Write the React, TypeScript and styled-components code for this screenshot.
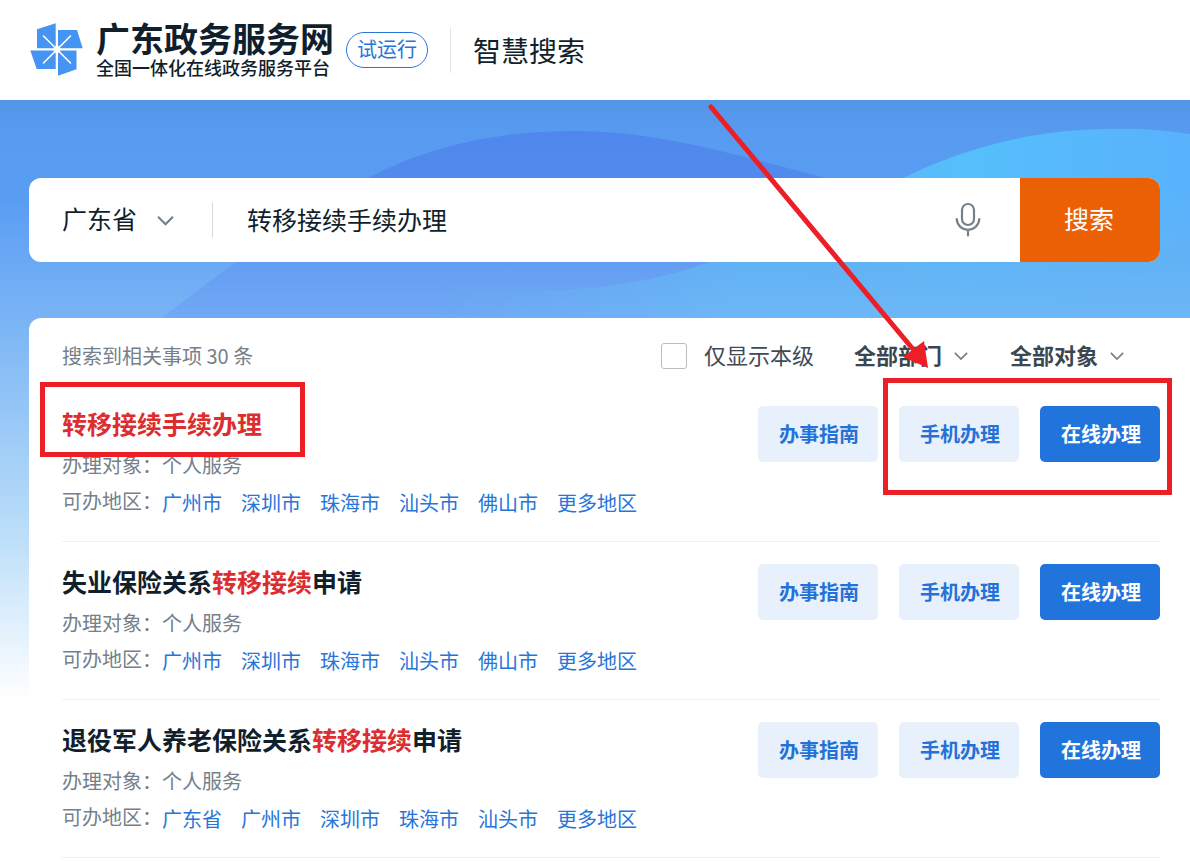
import React from "react";
import styled, { createGlobalStyle } from "styled-components";

const GlobalStyle = createGlobalStyle`
  *, *::before, *::after { box-sizing: border-box; }
  body {
    margin: 0;
    background: #fff;
    color: #111f2c;
    font-family: "Noto Sans CJK SC", "Liberation Sans", sans-serif;
    font-size: 20px;
  }
  button, input, select { font-family: inherit; color: inherit; }
`;

const RED = "#ec1f27";

const Page = styled.div`
  position: relative;
  overflow-x: hidden;
`;

const Header = styled.header`
  display: flex;
  align-items: center;
  height: 100px;
  padding: 0 30px;
  background: #fff;
`;

const Brand = styled.a`
  display: flex;
  align-items: center;
  gap: 12px;
  color: inherit;
  text-decoration: none;
`;

const BrandText = styled.span`
  display: flex;
  flex-direction: column;
  padding-bottom: 2px;
`;

const BrandName = styled.strong`
  font-size: 34px;
  line-height: 36px;
  font-weight: 700;
`;

const BrandSlogan = styled.span`
  font-size: 18px;
  line-height: 22px;
  font-weight: 500;
`;

const TrialBadge = styled.span`
  margin-left: 12px;
  padding: 0 10px 2px;
  border: 1px solid #2775d9;
  border-radius: 18px;
  color: #2775d9;
  font-size: 20px;
  line-height: 32px;
`;

const HeaderTitle = styled.h1`
  margin: 0 0 0 22px;
  padding-left: 22px;
  border-left: 1px solid #e3e6ea;
  font-size: 28px;
  line-height: 46px;
  font-weight: 400;
`;

const Hero = styled.main`
  position: relative;
  background: linear-gradient(
    #5395e8 0,
    #589cf2 40px,
    #599df3 100px,
    #7ab4f5 220px,
    #bddff9 440px,
    #fff 600px
  );
  padding-top: 78px;
`;

const Waves = styled.svg`
  position: absolute;
  top: 0;
  left: 0;
  width: 100%;
  height: 230px;
`;

const SearchBar = styled.form`
  position: relative;
  display: flex;
  align-items: center;
  height: 84px;
  margin: 0 30px 56px 29px;
  border-radius: 12px;
  background: #fff;
  overflow: hidden;
`;

const SelectWrap = styled.span`
  position: relative;
  display: inline-flex;
  align-items: center;
  color: #3f4a54;

  svg {
    position: absolute;
    right: 0;
    pointer-events: none;
  }
`;

const Dropdown = styled.select<{ $size: "large" | "medium" }>`
  appearance: none;
  border: 0;
  margin: 0;
  background: transparent;
  padding: 0 ${(p) => (p.$size === "large" ? 36 : 25)}px 4px 0;
  font-size: ${(p) => (p.$size === "large" ? 25 : 22)}px;
  font-weight: ${(p) => (p.$size === "large" ? 400 : 700)};
  color: ${(p) => (p.$size === "large" ? "#111f2c" : "#3a4650")};
  line-height: 32px;
`;

const RegionPicker = styled.div`
  margin-left: 33px;
  padding-right: 38px;
  border-right: 1px solid #d5d8dc;
`;

const SearchInput = styled.input`
  flex: 1;
  min-width: 0;
  height: 84px;
  border: 0;
  padding: 0 0 2px 34px;
  background: transparent;
  font-size: 25px;
  outline: 0;
`;

const VoiceButton = styled.button`
  display: flex;
  border: 0;
  padding: 0;
  margin-right: 39px;
  background: none;
  color: #75808a;
`;

const SearchButton = styled.button`
  align-self: stretch;
  width: 140px;
  border: 0;
  padding: 0 2px 4px 0;
  background: #eb6004;
  color: #fff;
  font-size: 25px;
`;

const Results = styled.section`
  position: relative;
  margin-left: 29px;
  padding: 20px 30px 0 33px;
  border-radius: 12px 0 0 0;
  background: #fff;
`;

const FilterBar = styled.div`
  display: flex;
  align-items: center;
  height: 36px;
  margin-bottom: 10px;
  padding-right: 36px;
`;

const Count = styled.p`
  margin: 0 auto 0 0;
  padding-bottom: 2px;
  color: #75808a;
`;

const OwnLevel = styled.label`
  display: flex;
  align-items: center;
  gap: 17px;
  margin-right: 40px;
  color: #3f4a54;
  font-size: 22px;

  span {
    padding-bottom: 4px;
  }
`;

const Checkbox = styled.input`
  appearance: none;
  width: 26px;
  height: 26px;
  margin: 0;
  border: 1px solid #b9bec3;
  border-radius: 3px;
  background: #fff;
`;

const Filters = styled.div`
  display: flex;
  gap: 42px;
`;

const List = styled.ul`
  list-style: none;
  margin: 0;
  padding: 0;
`;

const Item = styled.li`
  display: flex;
  justify-content: space-between;
  align-items: flex-start;
  padding: 22px 0 18px;
  border-bottom: 1px solid #eff1f3;
`;

const ItemTitle = styled.h2`
  position: relative;
  width: max-content;
  margin: 0 0 7px;
  font-size: 25px;
  line-height: 34px;
  font-weight: 700;
`;

const Keyword = styled.em`
  color: #dc2d30;
  font-style: normal;
`;

const Meta = styled.div`
  display: flex;
  align-items: flex-start;
  color: #75808a;
  line-height: 36px;
`;

const Regions = styled.span`
  display: flex;
  gap: 19px;
  line-height: 40px;
`;

const RegionLink = styled.a`
  color: #2775d9;
  text-decoration: none;
`;

const Actions = styled.div`
  position: relative;
  display: flex;
  gap: 21px;
`;

const ActionButton = styled.button<{ $primary?: boolean }>`
  width: 120px;
  height: 56px;
  padding: 0 0 2px 2px;
  border: 0;
  border-radius: 5px;
  background: ${(p) => (p.$primary ? "#2074dc" : "#e8f0fb")};
  color: ${(p) => (p.$primary ? "#fff" : "#2472d8")};
  font-size: 20px;
  font-weight: 700;
`;

const TitleMark = styled.span`
  position: absolute;
  inset: -24px -43px -17px -22px;
  border: 5px solid ${RED};
`;

const ActionMark = styled.span`
  position: absolute;
  top: -28px;
  right: -12px;
  width: 289px;
  height: 117px;
  border: 5px solid ${RED};
  pointer-events: none;
`;

const Arrow = styled.svg`
  position: absolute;
  top: 100px;
  right: 250px;
  pointer-events: none;
`;

const CYAN_WAVE =
  "M1190 34 Q1150 28 1110 29 C1030 29 960 50 903 78 C830 112 775 138 710 162 C610 198 500 196 400 178 L300 230 H1190Z";

const Logo = () => (
  <svg width="54" height="56" viewBox="0 0 54 56" aria-hidden="true">
    <g fill="#4593f2">
      <path d="M7 7.300 25.700 1.300V26.300H7Z" />
      <path d="M28 8H47L52.700 26.300H28Z" />
      <path d="M28 28.500H46.500V47.300L28 53.700Z" />
      <path d="M.3 28.500H25.700V47H6.700Z" />
    </g>
    <g stroke="#fff" strokeWidth="1.600" strokeLinecap="round">
      <path d="M13.500 14 40.500 41M40.500 14 13.500 41" />
      <circle cx="27" cy="27.500" r="2.800" fill="#fff" />
    </g>
  </svg>
);

const Chevron = ({ size }: { size: number }) => (
  <svg width={size} height={size} viewBox="0 0 16 16" fill="none" stroke="#75808a" strokeWidth="2" aria-hidden="true">
    <path d="M1 4.500 8 11.500 15 4.500" />
  </svg>
);

const Microphone = () => (
  <svg width="26" height="36" viewBox="0 0 26 36" fill="none" stroke="currentColor" strokeWidth="2.200" strokeLinecap="round" aria-hidden="true">
    <rect x="7" y="2" width="12" height="21" rx="6" />
    <path d="M1.700 17C3 31.500 23 31.500 24.300 17M13 28.500V33.500" />
  </svg>
);

const items = [
  {
    title: [["转移接续手续办理", true]],
    regions: ["广州市", "深圳市", "珠海市", "汕头市", "佛山市", "更多地区"],
    marked: true,
  },
  {
    title: [["失业保险关系", false], ["转移接续", true], ["申请", false]],
    regions: ["广州市", "深圳市", "珠海市", "汕头市", "佛山市", "更多地区"],
    marked: false,
  },
  {
    title: [["退役军人养老保险关系", false], ["转移接续", true], ["申请", false]],
    regions: ["广东省", "广州市", "深圳市", "珠海市", "汕头市", "更多地区"],
    marked: false,
  },
] as const;

export default function App() {
  return (
    <Page lang="zh-CN">
      <GlobalStyle />
      <Header>
        <Brand href="#">
          <Logo />
          <BrandText>
            <BrandName>广东政务服务网</BrandName>
            <BrandSlogan>全国一体化在线政务服务平台</BrandSlogan>
          </BrandText>
        </Brand>
        <TrialBadge>试运行</TrialBadge>
        <HeaderTitle>智慧搜索</HeaderTitle>
      </Header>

      <Hero>
        <Waves viewBox="0 0 1190 230" preserveAspectRatio="none" aria-hidden="true">
          <defs>
            <linearGradient id="violet" x1="0" y1="0" x2="0" y2="1">
              <stop offset="0" stopColor="#5087ec" />
              <stop offset="0.350" stopColor="#548bee" />
              <stop offset="0.650" stopColor="#649cf2" />
              <stop offset="1" stopColor="#72adf4" />
            </linearGradient>
            <linearGradient id="cyan" gradientUnits="userSpaceOnUse" x1="300" y1="0" x2="1190" y2="0">
              <stop offset="0.350" stopColor="#67b0f3" />
              <stop offset="0.600" stopColor="#5cb6f5" />
              <stop offset="0.750" stopColor="#56bffb" />
              <stop offset="1" stopColor="#58b2fc" />
            </linearGradient>
            <linearGradient id="haze" x1="0" y1="0" x2="0" y2="1">
              <stop offset="0.300" stopColor="#6ab5f6" stopOpacity="0" />
              <stop offset="0.650" stopColor="#62b2f4" stopOpacity="0.800" />
              <stop offset="1" stopColor="#70b8f7" />
            </linearGradient>
            <linearGradient id="fade" gradientUnits="userSpaceOnUse" x1="440" y1="0" x2="740" y2="0">
              <stop offset="0" stopColor="#000" />
              <stop offset="1" stopColor="#fff" />
            </linearGradient>
            <mask id="fadeLeft" maskUnits="userSpaceOnUse" x="0" y="0" width="1190" height="230">
              <rect width="1190" height="230" fill="url(#fade)" />
            </mask>
          </defs>
          <path
            fill="url(#violet)"
            d="M145 230 C220 175 290 115 368 78 C430 45 500 31 575 31 C660 31 740 56 825 78 L980 130 V230Z"
          />
          <g mask="url(#fadeLeft)">
            <path fill="url(#cyan)" d={CYAN_WAVE} />
            <path fill="url(#haze)" d={CYAN_WAVE} />
          </g>
        </Waves>

        <SearchBar onSubmit={(e) => e.preventDefault()}>
          <RegionPicker>
            <SelectWrap>
              <Dropdown $size="large" aria-label="地区">
                <option>广东省</option>
              </Dropdown>
              <Chevron size={17} />
            </SelectWrap>
          </RegionPicker>
          <SearchInput aria-label="搜索内容" defaultValue="转移接续手续办理" />
          <VoiceButton type="button" aria-label="语音输入">
            <Microphone />
          </VoiceButton>
          <SearchButton type="submit">搜索</SearchButton>
        </SearchBar>

        <Results>
          <FilterBar>
            <Count>搜索到相关事项 30 条</Count>
            <OwnLevel>
              <Checkbox type="checkbox" />
              <span>仅显示本级</span>
            </OwnLevel>
            <Filters>
              {["全部部门", "全部对象"].map((name) => (
                <SelectWrap key={name}>
                  <Dropdown $size="medium" aria-label={name}>
                    <option>{name}</option>
                  </Dropdown>
                  <Chevron size={14} />
                </SelectWrap>
              ))}
            </Filters>
          </FilterBar>

          <List>
            {items.map((item, i) => (
              <Item key={i}>
                <div>
                  <ItemTitle>
                    {item.title.map(([text, hit]) => (hit ? <Keyword key={text}>{text}</Keyword> : text))}
                    {item.marked && <TitleMark />}
                  </ItemTitle>
                  <Meta>
                    <span>办理对象：</span>
                    <span>个人服务</span>
                  </Meta>
                  <Meta>
                    <span>可办地区：</span>
                    <Regions>
                      {item.regions.map((region) => (
                        <RegionLink key={region} href="#">
                          {region}
                        </RegionLink>
                      ))}
                    </Regions>
                  </Meta>
                </div>
                <Actions>
                  <ActionButton type="button">办事指南</ActionButton>
                  <ActionButton type="button">手机办理</ActionButton>
                  <ActionButton type="button" $primary>
                    在线办理
                  </ActionButton>
                  {item.marked && <ActionMark />}
                </Actions>
              </Item>
            ))}
          </List>
        </Results>
      </Hero>

      <Arrow width="240" height="275" viewBox="0 0 240 275" aria-hidden="true">
        <path d="M11 7 212 248" stroke={RED} strokeWidth="5" strokeLinecap="round" />
        <path d="M228 268 203 257 224 241Z" fill={RED} />
      </Arrow>
    </Page>
  );
}
